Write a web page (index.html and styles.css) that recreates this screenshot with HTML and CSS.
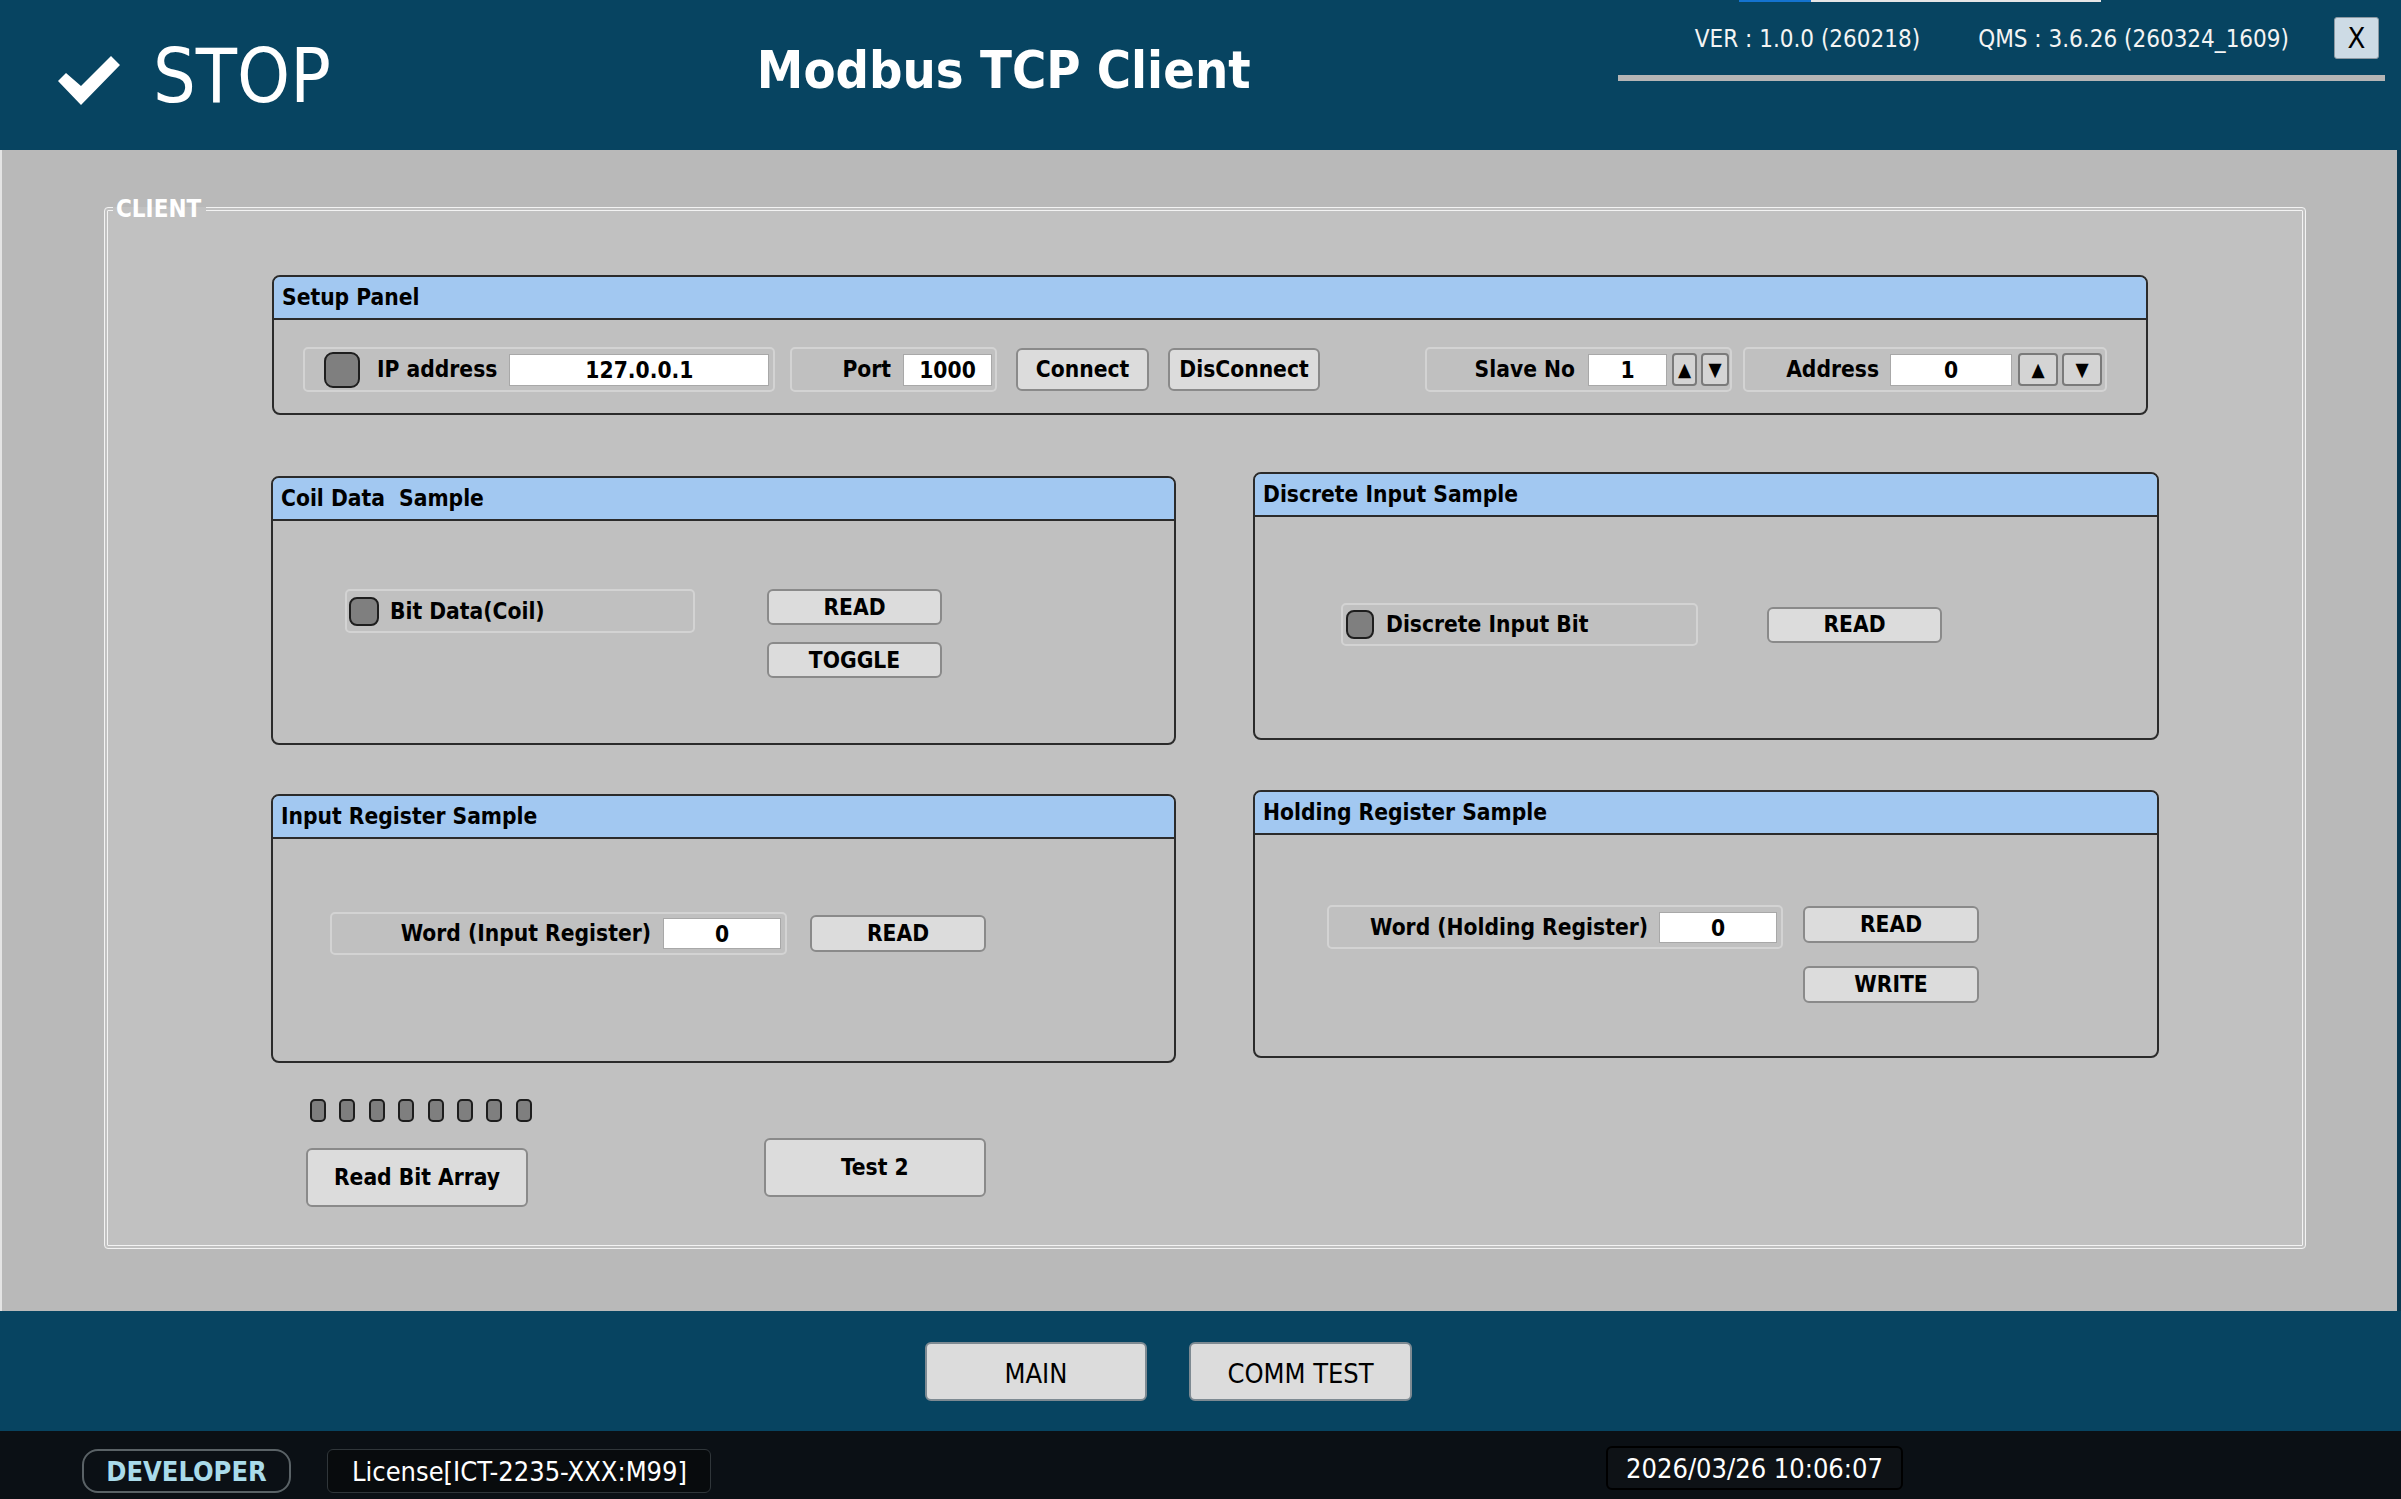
FILE: index.html
```html
<!DOCTYPE html>
<html lang="en">
<head>
    <meta charset="UTF-8">
    <meta name="viewport" content="width=device-width, initial-scale=1.0">
    <title>Modbus TCP Client</title>
    <link rel="stylesheet" href="styles.css">
</head>
<body>
<div class="app">
    <header class="topbar">
        <div class="state">
            <svg class="check" viewBox="0 0 62 49"><path d="M0 25 L8 17 L23 30 L53 0 L62 9 L23 49 Z"/></svg>
            <span class="state-text">STOP</span>
        </div>
        <h1 class="title">Modbus TCP Client</h1>
        <div class="info">
            <div class="progress"><span class="progress-fill"></span></div>
            <div class="info-row">
                <span>VER : 1.0.0 (260218)</span>
                <span class="qms">QMS : 3.6.26 (260324_1609)</span>
                <button class="close">X</button>
            </div>
            <div class="info-line"></div>
        </div>
    </header>

    <main class="workspace">
        <fieldset class="client">
            <legend>CLIENT</legend>
            <div class="client-body">

                <section class="panel setup">
                    <div class="panel-head">Setup Panel</div>
                    <div class="setup-body">
                        <div class="group ip-group">
                            <span class="led"></span>
                            <span class="label">IP address</span>
                            <span class="field ip-field">127.0.0.1</span>
                        </div>
                        <div class="group port-group">
                            <span class="label">Port</span>
                            <span class="field port-field">1000</span>
                        </div>
                        <button class="btn connect">Connect</button>
                        <button class="btn disconnect">DisConnect</button>
                        <div class="group slave-group">
                            <span class="label">Slave No</span>
                            <span class="field slave-field">1</span>
                            <button class="spin slave-up">▲</button>
                            <button class="spin slave-down">▼</button>
                        </div>
                        <div class="group addr-group">
                            <span class="label">Address</span>
                            <span class="field addr-field">0</span>
                            <button class="spin addr-up">▲</button>
                            <button class="spin addr-down">▼</button>
                        </div>
                    </div>
                </section>

                <div class="columns">
                    <div class="col col-left">
                        <section class="panel sample coil">
                            <div class="panel-head">Coil Data&nbsp; Sample</div>
                            <div class="sample-body coil-body">
                                <div class="group bit-group coil-group">
                                    <span class="led led-sm"></span>
                                    <span class="label">Bit Data(Coil)</span>
                                </div>
                                <div class="btn-stack">
                                    <button class="btn action">READ</button>
                                    <button class="btn action">TOGGLE</button>
                                </div>
                            </div>
                        </section>

                        <section class="panel sample input-reg">
                            <div class="panel-head">Input Register Sample</div>
                            <div class="sample-body ireg-body">
                                <div class="group word-group ireg-group">
                                    <span class="label">Word (Input Register)</span>
                                    <span class="field word-field">0</span>
                                </div>
                                <button class="btn action">READ</button>
                            </div>
                        </section>

                        <div class="tools">
                            <div class="tool-stack">
                                <div class="bit-array">
                                    <span class="led led-xs"></span>
                                    <span class="led led-xs"></span>
                                    <span class="led led-xs"></span>
                                    <span class="led led-xs"></span>
                                    <span class="led led-xs"></span>
                                    <span class="led led-xs"></span>
                                    <span class="led led-xs"></span>
                                    <span class="led led-xs"></span>
                                </div>
                                <button class="btn big">Read Bit Array</button>
                            </div>
                            <button class="btn big test2">Test 2</button>
                        </div>
                    </div>

                    <div class="col col-right">
                        <section class="panel sample discrete">
                            <div class="panel-head">Discrete Input Sample</div>
                            <div class="sample-body disc-body">
                                <div class="group bit-group disc-group">
                                    <span class="led led-sm"></span>
                                    <span class="label">Discrete Input Bit</span>
                                </div>
                                <button class="btn action">READ</button>
                            </div>
                        </section>

                        <section class="panel sample holding">
                            <div class="panel-head">Holding Register Sample</div>
                            <div class="sample-body hold-body">
                                <div class="group word-group hold-group">
                                    <span class="label">Word (Holding Register)</span>
                                    <span class="field word-field">0</span>
                                </div>
                                <div class="btn-stack hold-stack">
                                    <button class="btn action">READ</button>
                                    <button class="btn action">WRITE</button>
                                </div>
                            </div>
                        </section>
                    </div>
                </div>

            </div>
        </fieldset>
    </main>

    <nav class="navbar">
        <button class="nav-btn main-btn">MAIN</button>
        <button class="nav-btn comm-btn">COMM TEST</button>
    </nav>

    <footer class="statusbar">
        <span class="role">DEVELOPER</span>
        <span class="license">License[ICT-2235-XXX:M99]</span>
        <span class="clock">2026/03/26 10:06:07</span>
    </footer>
</div>
</body>
</html>
```

FILE: styles.css
```css
* { box-sizing: border-box; }
html, body {
    margin: 0;
    padding: 0;
    width: 2401px;
    height: 1499px;
    overflow: hidden;
    background: #0b1015;
}
body {
    font-family: "DejaVu Sans Condensed", "DejaVu Sans", sans-serif;
    font-stretch: condensed;
    line-height: 1.2;
    color: #000;
}
button {
    font: inherit;
    color: #000;
    margin: 0;
    padding: 0;
    cursor: pointer;
}

/* ---- top bar ---- */
.topbar {
    height: 150px;
    background: #074461;
    display: flex;
    color: #fff;
}
.state {
    display: flex;
    align-items: center;
    align-self: center;
    margin-left: 58px;
    gap: 33px;
}
.check { width: 62px; height: 49px; fill: #fff; margin-top: 10px; }
.state-text {
    font-size: 75px;
    line-height: 1;
    padding-top: 3px;
}
.title {
    margin: 0 0 10px 426px;
    align-self: center;
    font-size: 52px;
    font-weight: bold;
    line-height: 1;
}
.info {
    margin-left: auto;
    margin-right: 16px;
    width: 767px;
    display: flex;
    flex-direction: column;
}
.progress {
    margin-left: 121px;
    width: 362px;
    height: 2px;
    background: #e6e6e6;
}
.progress-fill { display: block; width: 72px; height: 2px; background: #1473d0; }
.info-row {
    margin-top: 15px;
    height: 42px;
    display: flex;
    align-items: center;
    justify-content: flex-end;
    padding-right: 6px;
    padding-top: 2px;
    font-size: 24px;
    color: #f4f4f4;
}
.qms { margin-left: 58px; }
.close {
    margin-left: 45px;
    margin-top: -2px;
    width: 45px;
    height: 42px;
    background: #cddbe5;
    border: 1px solid #8c99a3;
    border-radius: 3px;
    font-size: 29px;
    line-height: 1;
}
.info-line { margin-top: 16px; height: 6px; background: #b5b5b5; }

/* ---- work area ---- */
.workspace {
    height: 1161px;
    background: #b9b9b9;
    border-left: 2px solid #e4e4e4;
    border-right: 4px solid #0a3a52;
    padding: 46px 0 0 102px;
}
.client {
    margin: 0;
    padding: 0;
    width: 2202px;
    height: 1053px;
    border: 4px double #f3f3f3;
    border-radius: 4px;
    background: #c1c1c1;
}
.client legend {
    margin-left: 5px;
    padding: 0 5px 0 3px;
    font-size: 24px;
    font-weight: bold;
    line-height: 26px;
    color: #fff;
}
.client-body { padding: 53px 0 0 163px; }

.panel {
    border: 2px solid #2b2b2b;
    border-radius: 8px;
    overflow: hidden;
    background: #c0c0c0;
}
.panel-head {
    height: 43px;
    background: #a2c8f1;
    border-bottom: 2px solid #2b2b2b;
    padding-left: 8px;
    font-size: 22.6px;
    font-weight: bold;
    line-height: 41px;
}
.setup { width: 1876px; height: 140px; margin-left: 1px; }
.setup-body {
    height: 93px;
    display: flex;
    align-items: flex-start;
    padding: 27px 0 0 29px;
}

.group {
    height: 45px;
    border: 2px solid #d3d3d3;
    border-radius: 5px;
    display: flex;
    align-items: center;
}
.label { font-size: 22.6px; font-weight: bold; white-space: nowrap; padding-top: 1px; }
.field {
    height: 32px;
    background: #fff;
    border: 1px solid #a8a8a8;
    font-size: 22.6px;
    font-weight: bold;
    line-height: 31px;
    text-align: center;
}
.led {
    display: block;
    flex: none;
    width: 36px;
    height: 36px;
    background: #7f7f7f;
    border: 2px solid #1e1e1e;
    border-radius: 9px;
}
.led-sm { width: 30px; height: 29px; border-radius: 8px; }
.led-xs { width: 16px; height: 23px; border-radius: 5px; }

.ip-group { width: 472px; padding-left: 19px; }
.ip-group .label { margin-left: 17px; }
.ip-field { width: 260px; margin-left: 12px; }
.port-group { width: 207px; margin-left: 15px; justify-content: flex-end; padding-right: 3px; }
.port-field { width: 89px; margin-left: 12px; }

.btn {
    background: #dcdcdc;
    border: 2px solid #8a8a8a;
    border-radius: 6px;
    font-size: 22.6px;
    font-weight: bold;
    padding-top: 1px;
}
.connect { width: 133px; height: 43px; margin-left: 19px; margin-top: 1px; }
.disconnect { width: 152px; height: 43px; margin-left: 19px; margin-top: 1px; }

.slave-group { width: 307px; margin-left: 105px; justify-content: flex-end; padding-right: 1px; }
.slave-field { width: 79px; margin-left: 13px; }
.addr-group { width: 364px; margin-left: 11px; justify-content: flex-end; padding-right: 3px; }
.addr-field { width: 122px; margin-left: 11px; }
.spin {
    height: 33px;
    background: #d4d4d4;
    border: 2px solid #7a7a7a;
    border-radius: 4px;
    font-size: 19px;
    line-height: 1;
}
.slave-up { width: 25px; margin-left: 5px; }
.slave-down { width: 28px; margin-left: 4px; }
.addr-up { width: 40px; margin-left: 6px; }
.addr-down { width: 40px; margin-left: 4px; }

/* ---- sample panels ---- */
.columns {
    display: grid;
    grid-template-columns: 905px 906px;
    column-gap: 77px;
    margin-top: 57px;
}
.col { display: flex; flex-direction: column; }
.col-left { padding-top: 4px; gap: 49px; }
.col-right { gap: 50px; }
.sample { height: 269px; }
.col-right .sample { height: 268px; }
.sample-body { display: flex; }

.bit-group .label { margin-left: 11px; }
.coil-body { padding: 68px 0 0 72px; align-items: flex-start; gap: 72px; }
.coil-group { width: 350px; height: 44px; padding-left: 2px; }
.btn-stack { display: flex; flex-direction: column; gap: 17px; }
.action { width: 175px; height: 36px; }

.disc-body { padding: 86px 0 0 86px; align-items: center; gap: 69px; }
.disc-group { width: 357px; height: 43px; padding-left: 3px; }
.disc-group .led-sm { width: 28px; }
.disc-group .label { margin-left: 12px; }

.word-group { justify-content: flex-end; padding-right: 4px; }
.word-field { width: 118px; height: 31px; margin-left: 12px; }
.ireg-body { padding: 73px 0 0 57px; align-items: center; gap: 23px; }
.ireg-group { width: 457px; height: 43px; }
.ireg-body .action { width: 176px; height: 37px; }

.hold-body { padding: 70px 0 0 72px; align-items: flex-start; gap: 20px; }
.hold-group { width: 456px; height: 44px; }
.hold-group .word-field { margin-left: 11px; }
.hold-stack { gap: 23px; padding-top: 1px; }
.hold-stack .action { width: 176px; height: 37px; }

.tools { display: flex; align-items: flex-start; margin-top: -13px; padding-left: 35px; }
.tool-stack { display: flex; flex-direction: column; }
.bit-array { display: flex; gap: 13.4px; padding-left: 4px; }
.big { width: 222px; height: 59px; }
.tool-stack .big { margin-top: 26px; }
.test2 { margin-left: 232px; margin-top: 39px; }

/* ---- bottom bars ---- */
.navbar {
    height: 120px;
    background: #074461;
    display: flex;
    align-items: center;
    padding-left: 925px;
    gap: 42px;
}
.nav-btn {
    width: 222px;
    height: 59px;
    background: #dcdcdc;
    border: 2px solid #7e8a92;
    border-radius: 6px;
    font-size: 27px;
    padding-top: 7px;
}
.comm-btn { width: 223px; }

.statusbar {
    height: 68px;
    background: #0b1015;
    display: flex;
    align-items: flex-start;
    padding: 18px 0 0 82px;
    font-size: 27px;
}
.role {
    width: 209px;
    height: 44px;
    border: 2px solid #5a6266;
    border-radius: 16px;
    color: #a9dbea;
    font-weight: bold;
    text-align: center;
    line-height: 42px;
}
.license {
    width: 384px;
    height: 44px;
    margin-left: 36px;
    border: 1px solid #30363a;
    border-radius: 6px;
    background: #080b0d;
    color: #fff;
    padding-left: 24px;
    line-height: 44px;
}
.clock {
    width: 297px;
    height: 44px;
    margin-left: 895px;
    margin-top: -3px;
    border: 2px solid #000;
    border-radius: 6px;
    background: #0e1216;
    color: #fff;
    text-align: center;
    line-height: 42px;
}
```
